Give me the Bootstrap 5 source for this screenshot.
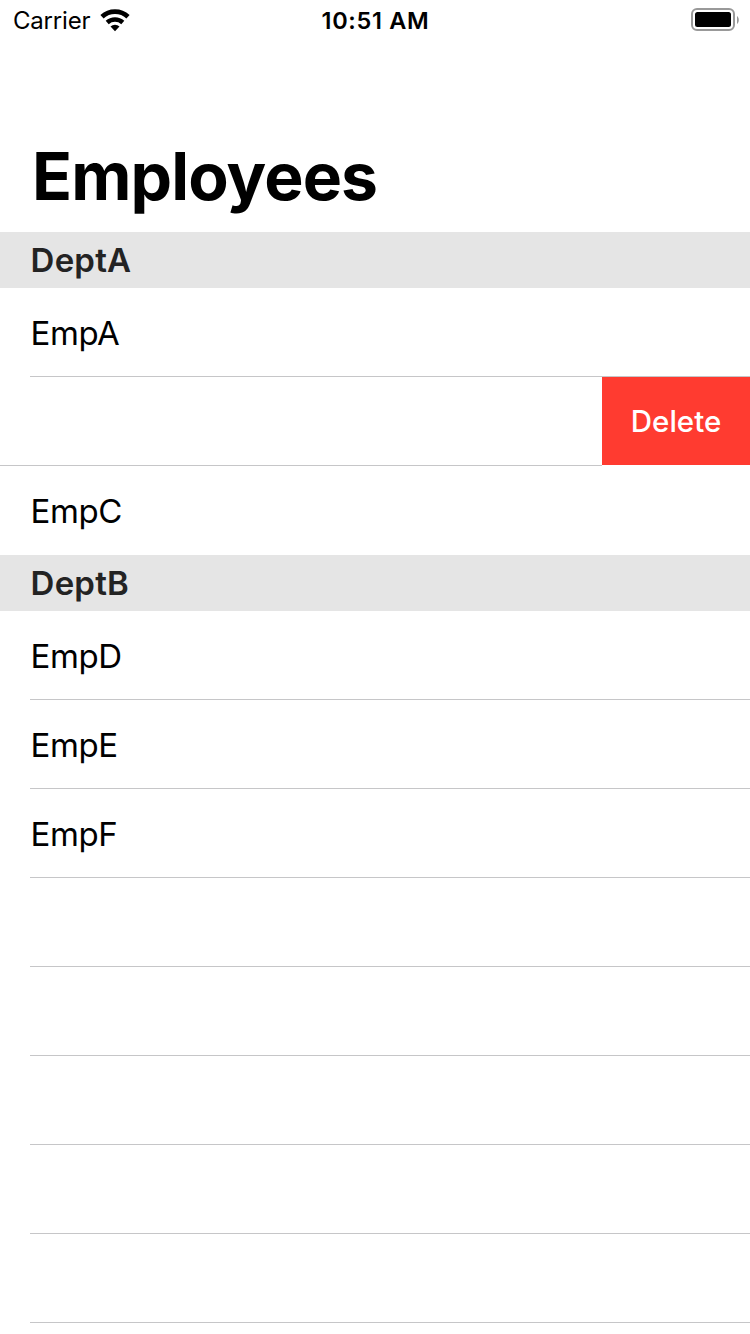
<!DOCTYPE html>
<html lang="en">
<head>
<meta charset="utf-8">
<meta name="viewport" content="width=device-width, initial-scale=1">
<title>Employees</title>
<link href="https://cdn.jsdelivr.net/npm/bootstrap@5.3.0/dist/css/bootstrap.min.css" rel="stylesheet">
<style>
  body { font-family: Inter, "Liberation Sans", sans-serif; color: #000; background: #fff; }
  .phone { width: 750px; height: 1334px; }
  .status-bar { height: 40px; font-size: 24px; line-height: 40px; padding-top: 1px; }
  .carrier { padding-left: 13px; letter-spacing: -.2px; }
  .wifi { margin: 7px 0 0 8.8px; }
  .clock { font-size: 23.5px; font-weight: 600; letter-spacing: .7px; padding-left: 1px; }
  .page-title { font-size: 66px; font-weight: 700; line-height: 80px; height: 96px; margin-top: 96px; padding-left: 32px; letter-spacing: -.9px; }
  .dept { height: 56px; padding-left: 30.6px; background: #e5e5e5; color: #232323; font-size: 33px; font-weight: 600; line-height: 56px; letter-spacing: .2px; }
  .emp { height: 89px; margin-left: 30px; padding-left: .6px; border-bottom: 1px solid #c6c6c8; font-size: 33px; line-height: 90px; letter-spacing: -.45px; }
  .emp.swiped { margin-left: 0; padding-left: 0; border-bottom: 0; }
  .slid-row { border-bottom: 1px solid #c6c6c8; }
  .emp.last { border-bottom-color: transparent; }
  .delete-btn { width: 148px; height: 88px; background: #ff3b30; font-size: 29.5px; font-weight: 500; letter-spacing: 0; }
</style>
</head>
<body>
<main class="phone overflow-hidden d-flex flex-column">
  <header class="status-bar row g-0 flex-shrink-0">
    <div class="col-4 d-flex carrier">Carrier
      <svg class="wifi" width="32" height="24" viewBox="0 0 32 24" aria-hidden="true">
        <g fill="none" stroke="#000">
          <path stroke-width="4.8" d="M3 8.700a19.300 19.300 0 0 1 26 0"/>
          <path stroke-width="4.500" d="M8.200 14.500a11.600 11.600 0 0 1 15.600 0"/>
        </g>
        <path d="M16 23.300l-4.500-4.900a6.600 6.600 0 0 1 9 0z"/>
      </svg>
    </div>
    <div class="col-4 text-center clock">10:51 AM</div>
    <div class="col-4 d-flex justify-content-end">
      <svg width="60" height="32" viewBox="690 0 60 32" aria-hidden="true">
        <rect x="692" y="8" width="42" height="21" rx="5" fill="none" stroke="#999" stroke-width="2"/>
        <rect x="695" y="11" width="36" height="15" rx="2.5"/>
        <path d="M737 15v8c2.400-1.500 2.400-6.500 0-8z" fill="#999"/>
      </svg>
    </div>
  </header>
  <h1 class="page-title mb-0 flex-shrink-0">Employees</h1>
  <section>
    <h2 class="dept mb-0">DeptA</h2>
    <div class="emp">EmpA</div>
    <div class="emp swiped d-flex">
      <div class="slid-row flex-grow-1"></div>
      <button class="delete-btn btn rounded-0 border-0 p-0 text-white">Delete</button>
    </div>
    <div class="emp last">EmpC</div>
  </section>
  <section>
    <h2 class="dept mb-0">DeptB</h2>
    <div class="emp">EmpD</div>
    <div class="emp">EmpE</div>
    <div class="emp">EmpF</div>
    <div class="emp"></div>
    <div class="emp"></div>
    <div class="emp"></div>
    <div class="emp"></div>
    <div class="emp"></div>
  </section>
</main>
<script src="https://cdn.jsdelivr.net/npm/bootstrap@5.3.0/dist/js/bootstrap.bundle.min.js"></script>
</body>
</html>
